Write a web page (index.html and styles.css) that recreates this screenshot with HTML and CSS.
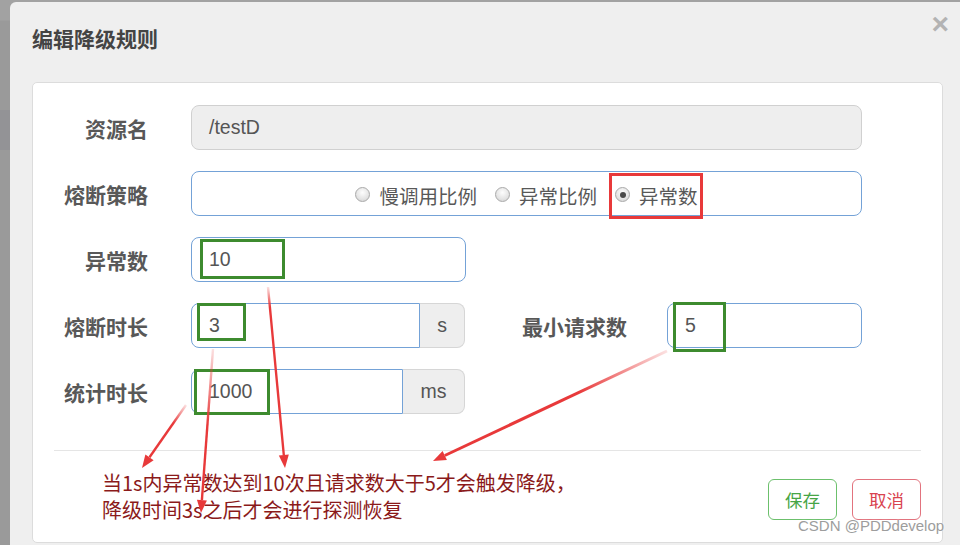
FILE: index.html
```html
<!DOCTYPE html>
<html lang="zh">
<head>
<meta charset="utf-8">
<title>编辑降级规则</title>
<link rel="stylesheet" href="styles.css">
</head>
<body>
<div class="modal">
  <div class="modal-header">
    <h4 class="title">编辑降级规则</h4>
    <span class="close">×</span>
  </div>
  <div class="panel">
    <div class="form">
      <div class="row">
        <label class="label">资源名</label>
        <div class="input readonly w-full">/testD</div>
      </div>
      <div class="row">
        <label class="label">熔断策略</label>
        <div class="input radio-box w-full">
          <span class="radio-opt"><span class="radio"></span>慢调用比例</span>
          <span class="radio-opt"><span class="radio"></span>异常比例</span>
          <span class="radio-opt"><span class="radio checked"></span>异常数</span>
        </div>
      </div>
      <div class="row">
        <label class="label">异常数</label>
        <div class="input w-mid">10</div>
      </div>
      <div class="row">
        <label class="label">熔断时长</label>
        <div class="group">
          <div class="input addon-input w-g1">3</div>
          <span class="addon w-a1">s</span>
        </div>
        <label class="label label2">最小请求数</label>
        <div class="input w-small">5</div>
      </div>
      <div class="row last">
        <label class="label">统计时长</label>
        <div class="group">
          <div class="input addon-input w-g2">1000</div>
          <span class="addon w-a2">ms</span>
        </div>
      </div>
    </div>
    <div class="footer">
      <p class="note">当1s内异常数达到10次且请求数大于5才会触发降级，<br>降级时间3s之后才会进行探测恢复</p>
      <div class="buttons">
        <button class="btn save">保存</button>
        <button class="btn cancel">取消</button>
      </div>
    </div>
  </div>
</div>

<svg class="annot" width="960" height="545" viewBox="0 0 960 545" xmlns="http://www.w3.org/2000/svg">
  <defs>
    <linearGradient id="g1" gradientUnits="userSpaceOnUse" x1="186" y1="405" x2="149.5" y2="457.3">
      <stop offset="0" stop-color="#e8393a" stop-opacity="0.15"/>
      <stop offset="0.35" stop-color="#e8393a" stop-opacity="1"/>
    </linearGradient>
    <linearGradient id="g2" gradientUnits="userSpaceOnUse" x1="213" y1="349" x2="201" y2="500">
      <stop offset="0" stop-color="#e8393a" stop-opacity="0.15"/>
      <stop offset="0.5" stop-color="#e8393a" stop-opacity="1"/>
    </linearGradient>
    <linearGradient id="g3" gradientUnits="userSpaceOnUse" x1="268" y1="287" x2="283.8" y2="455">
      <stop offset="0" stop-color="#e8393a" stop-opacity="0.15"/>
      <stop offset="0.12" stop-color="#e8393a" stop-opacity="1"/>
    </linearGradient>
    <linearGradient id="g4" gradientUnits="userSpaceOnUse" x1="667" y1="351" x2="444.8" y2="455.5">
      <stop offset="0" stop-color="#e8393a" stop-opacity="0.15"/>
      <stop offset="0.4" stop-color="#e8393a" stop-opacity="1"/>
    </linearGradient>
  </defs>

  <rect x="610.5" y="174.5" width="91" height="43" fill="none" stroke="#e8393a" stroke-width="3"/>
  <rect x="201.5" y="240.5" width="82" height="37" fill="none" stroke="#3d8b2f" stroke-width="3"/>
  <rect x="198.5" y="304.5" width="46" height="35" fill="none" stroke="#3d8b2f" stroke-width="3"/>
  <rect x="195.5" y="370.5" width="73" height="43" fill="none" stroke="#3d8b2f" stroke-width="3"/>
  <rect x="674.5" y="303.5" width="50" height="47" fill="none" stroke="#3d8b2f" stroke-width="3"/>

  <line x1="186" y1="405" x2="149.5" y2="457.3" stroke="url(#g1)" stroke-width="2.4"/>
  <polygon points="142,468 153.6,460.2 145.4,454.5" fill="#e8393a"/>

  <line x1="213" y1="349" x2="201.9" y2="500" stroke="url(#g2)" stroke-width="2.4"/>
  <polygon points="201,513 206.9,500.4 196.9,499.7" fill="#e8393a"/>

  <line x1="268" y1="287" x2="283.8" y2="455" stroke="url(#g3)" stroke-width="2.4"/>
  <polygon points="285,468 288.8,454.6 278.8,455.5" fill="#e8393a"/>

  <line x1="667" y1="351" x2="444.8" y2="455.5" stroke="url(#g4)" stroke-width="3"/>
  <polygon points="433,461 446.9,460 442.6,450.9" fill="#e8393a"/>
</svg>

<div class="watermark">CSDN @PDDdevelop</div>
</body>
</html>
```

FILE: styles.css
```css
* {
  box-sizing: border-box;
}

html, body {
  margin: 0;
  padding: 0;
}

body {
  width: 960px;
  height: 545px;
  overflow: hidden;
  position: relative;
  background: linear-gradient(to bottom, #a2a2a2 0, #a2a2a2 20px, #9a9a9a 21px, #9a9a9a 110px, #939396 110px, #939396 150px, #9a9a9a 150px);
  font-family: "Liberation Sans", "Noto Sans CJK SC", sans-serif;
  color: #555;
}

.modal {
  margin: 2px 0 0 10px;
  padding: 0 17px 0 22px;
  height: 543px;
  overflow: hidden;
  background: #efefef;
  border-radius: 6px 0 0 0;
}

.modal-header {
  height: 80px;
  display: flex;
  justify-content: space-between;
  align-items: flex-start;
}

.title {
  margin: 0;
  padding-top: 24px;
  font-family: "Noto Sans CJK SC", sans-serif;
  font-size: 21px;
  line-height: 24px;
  font-weight: bold;
  color: #444;
}

.close {
  margin-top: 7px;
  margin-right: -6px;
  font-family: "Liberation Sans", sans-serif;
  font-size: 30px;
  line-height: 30px;
  font-weight: bold;
  color: #b3b3b3;
}

.panel {
  height: 461px;
  background: #fff;
  border: 1px solid #dcdcdc;
  border-radius: 5px;
  padding: 22px 21px 0;
}

.form {
  margin-bottom: 36px;
}

.row {
  display: flex;
  align-items: center;
  height: 45px;
  margin-bottom: 21px;
}

.row.last {
  margin-bottom: 0;
}

.label {
  width: 94px;
  margin-right: 43px;
  text-align: right;
  font-family: "Noto Sans CJK SC", sans-serif;
  font-size: 21px;
  font-weight: bold;
  color: #585858;
  flex: none;
}

.label2 {
  width: 162px;
  margin-right: 40px;
}

.input {
  height: 45px;
  line-height: 43px;
  border: 1px solid #74a2d7;
  border-radius: 8px;
  padding: 0 17px;
  font-size: 19.5px;
  color: #555;
  background: #fff;
  flex: none;
}

.readonly {
  background: #eee;
  border-color: #d0d0d0;
}

.w-full {
  width: 671px;
}

.w-mid {
  width: 275px;
}

.w-small {
  width: 195px;
}

.group {
  display: flex;
  flex: none;
}

.addon-input {
  border-radius: 8px 0 0 8px;
}

.w-g1 {
  width: 229px;
}

.w-g2 {
  width: 212px;
}

.addon {
  height: 45px;
  line-height: 43px;
  text-align: center;
  background: #eee;
  border: 1px solid #d6d6d6;
  border-left: none;
  border-radius: 0 8px 8px 0;
  font-size: 19.5px;
  color: #555;
}

.w-a1 {
  width: 45px;
}

.w-a2 {
  width: 62px;
}

.radio-box {
  display: flex;
  justify-content: center;
  align-items: center;
  gap: 18px;
  padding: 4px 0 0;
  font-family: "Noto Sans CJK SC", sans-serif;
}

.radio-opt {
  display: flex;
  align-items: center;
  font-size: 19.5px;
  color: #585858;
  line-height: 24px;
}

.radio {
  width: 15px;
  height: 15px;
  margin-right: 9px;
  margin-top: -2px;
  border-radius: 50%;
  border: 1px solid #a9a9a9;
  background: radial-gradient(circle at 50% 35%, #fdfdfd 0, #e6e6e6 55%, #cfcfcf 100%);
  display: flex;
  align-items: center;
  justify-content: center;
}

.radio.checked::after {
  content: "";
  width: 6px;
  height: 6px;
  border-radius: 50%;
  background: #4a4a4a;
}

.footer {
  border-top: 1px solid #e5e5e5;
  display: flex;
  justify-content: space-between;
  align-items: flex-start;
}

.note {
  margin: 0;
  padding: 18px 0 0 48px;
  font-family: "Noto Sans CJK SC", sans-serif;
  font-size: 20px;
  line-height: 27px;
  color: #8b1a1a;
  white-space: nowrap;
}

.buttons {
  display: flex;
  gap: 15px;
  margin-top: 28px;
}

.btn {
  width: 69px;
  height: 41px;
  padding: 0;
  background: #fff;
  border: 1px solid;
  border-radius: 6px;
  font-family: "Noto Sans CJK SC", sans-serif;
  font-size: 17.5px;
}

.save {
  border-color: #6cc06c;
  color: #46a546;
}

.cancel {
  border-color: #e2737e;
  color: #d9434f;
}

.annot {
  position: absolute;
  left: 0;
  top: 0;
  pointer-events: none;
}

.watermark {
  position: absolute;
  left: 798px;
  top: 517px;
  font-family: "Liberation Sans", sans-serif;
  font-size: 15px;
  color: #9d9d9d;
  text-shadow: 0 0 2px #fff;
  white-space: nowrap;
}
```
